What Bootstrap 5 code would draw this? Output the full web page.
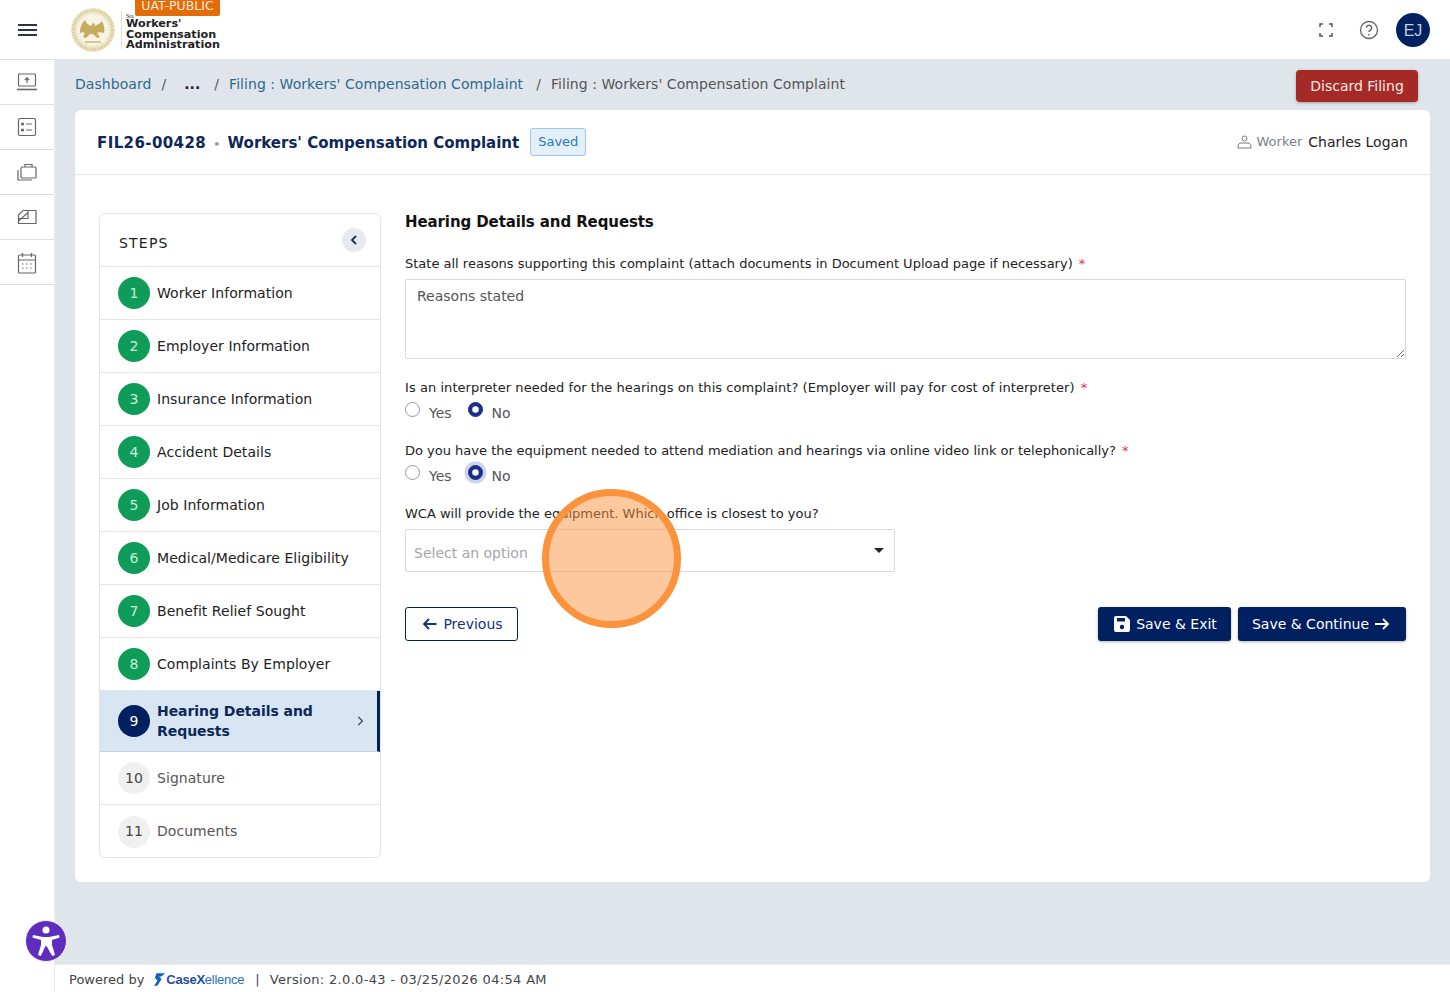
<!DOCTYPE html>
<html lang="en">
<head>
<meta charset="UTF-8">
<title>Hearing Details and Requests</title>
<link href="https://cdn.jsdelivr.net/npm/bootstrap@5.3.0/dist/css/bootstrap.min.css" rel="stylesheet">
<style>
html, body { height: 100%; overflow: hidden; }
body { font-family: "DejaVu Sans", sans-serif; font-size: 14px; color: #212529; background: #e0e5ec; }
.app-shell { height: 992px; }
.top-bar { height: 60px; background: #fff; border-bottom: 1px solid #dfe3e8; padding: 0 20px 0 18px; position: relative; }
.logo-box { margin-left: 32px; height: 59px; position: relative; }
.logo-divider { width: 1px; height: 38px; background: #e6dfc4; margin: 0 4px 0 5px; }
.logo-text { font-size: 11.2px; font-weight: 700; line-height: 10.5px; color: #222; padding-top: 5px; white-space: nowrap; }
.logo-state { font-family: "Liberation Serif", serif; font-size: 6px; font-weight: 400; line-height: 6px; display: block; }
.uat-tag { position: absolute; left: 65px; top: 0; width: 85px; height: 16px; background: #e36c0a; color: #fde9d9; font-size: 12.5px; line-height: 12px; text-align: center; border-radius: 0 0 2px 2px; }
.avatar-dot { width: 34px; height: 34px; padding-top: 2px; border-radius: 50%; background: #002060; color: #c3cfe2; font-size: 16px; display: flex; align-items: center; justify-content: center; font-family: "Liberation Sans", sans-serif; }
.side-rail { width: 55px; background: #fff; border-right: 1px solid #e8ebef; flex: none; }
.rail-item { height: 45px; border-bottom: 1px solid #d9dde2; display: flex; align-items: center; justify-content: center; padding-right: 1px; }
.main-pane { min-width: 0; }
.crumb-row { height: 50px; padding: 0 32px 2px 20px; letter-spacing: .05px; }
.crumb-row .breadcrumb { font-size: 14px; margin: 0; --bs-breadcrumb-divider-color: #555; --bs-breadcrumb-item-padding-x: 10px; }
.crumb-row a { color: #2d6a8f; text-decoration: none; }
.crumb-row .breadcrumb-item.active { color: #555; padding-left: 13px; }
.crumb-dots { color: #222; font-weight: 700; padding: 0 4px 0 8px; }
.discard-btn { background: #a52a25; border: 0; color: #fbe9e7; font-size: 14px; width: 122px; height: 32px; padding: 0; border-radius: 4px; box-shadow: 0 1px 3px rgba(0,0,0,.3); margin-top: 4px; letter-spacing: 0; }
.filing-card { margin: 0 20px 0 20px; height: 772px; border: 0; border-radius: 6px; }
.filing-head { height: 65px; padding: 0 22px; border-bottom: 1px solid #e3e6ea; }
.filing-title { color: #0d2858; font-size: 15px; font-weight: 700; margin: 0; white-space: nowrap; padding-top: 1px; }
.filing-id { letter-spacing: .4px; }
.title-sep { color: #999; margin: 0 2px; font-size: 11px; }
.saved-tag { background: #e3f0fb; border: 1px solid #9cc8ea; color: #2b78b5; font-size: 13px; border-radius: 3px; padding: 0 7px; height: 28px; display: flex; align-items: center; margin-left: 11px; }
.worker-lbl { color: #7d8287; font-size: 13px; margin: 0 6px 0 4px; }
.worker-name { color: #222; font-size: 14px; }
.filing-body { padding: 38px 24px 0 24px; }
.steps-box { width: 282px; flex: none; border: 1px solid #e0e3e7; border-radius: 6px; height: 645px; overflow: hidden; }
.steps-head { height: 53px; padding: 6px 14px 0 19px; border-bottom: 1px solid #e3e6ea; font-size: 14px; letter-spacing: 1.2px; color: #222; }
.collapse-dot { width: 24px; height: 24px; border-radius: 50%; background: #e6e9f0; display: flex; align-items: center; justify-content: center; margin-top: -7px; }
.step-row { height: 53px; padding: 0 18px; border-bottom: 1px solid #e3e6ea; gap: 7px; color: #222; letter-spacing: .05px; }
.step-row:last-child { border-bottom: 0; }
.step-num { width: 32px; height: 32px; border-radius: 50%; flex: none; display: flex; align-items: center; justify-content: center; font-size: 14px; font-weight: 400; }
.num-done { background: #0e9c58; color: #c9f1dc; }
.num-active { background: #002060; color: #fff; }
.num-todo { background: #f0f0f0; color: #444; }
.step-now { height: 61px; background: #d8e5f2; border-bottom: 1px solid #c5d2df; border-right: 3px solid #002060; color: #0d2858; font-weight: 700; line-height: 20px; padding-right: 13px; letter-spacing: -.05px; }
.step-later { color: #555; }
.form-pane { flex: 1; padding-left: 24px; min-width: 0; }
.form-title { font-size: 15px; font-weight: 700; color: #111; margin: 0 0 24px; line-height: 19px; letter-spacing: -.1px; }
.field-lbl { font-size: 13px; color: #222; margin-bottom: 5px; line-height: 16px; display: block; }
.lbl-wide { letter-spacing: .06px; }
.req-mark { color: #dc3545; margin-left: 2px; }
.reason-box { height: 80px; font-size: 14px; color: #555; padding: 6px 11px; border-color: #d5d8dc; border-radius: 2px; margin: 7px 0 21px; }
.radio-row { height: 24px; margin-bottom: 18px; gap: 16px; color: #555; }
.radio-row .form-check { margin: 0; padding-left: 24px; min-height: 0; line-height: 20px; }
.radio-row .form-check-input { width: 15px; height: 15px; margin-left: -24px; margin-top: 0; border-color: #999; position: relative; top: -1px; }
.radio-row .form-check-input:checked { background-color: #1a2f8a; border-color: #1a2f8a; }
.radio-focus { box-shadow: 0 0 0 3.5px #ccd4ea; }
.office-pick { width: 490px; height: 43px; margin-top: 7px; border: 1px solid #d5d8dc; border-radius: 2px; padding: 0 8px; color: #a3a6aa; font-size: 14px; }
.pick-text { padding-top: 5px; }
.pick-caret { width: 0; height: 0; border-left: 5px solid transparent; border-right: 5px solid transparent; border-top: 5px solid #222; margin-right: 2px; }
.form-actions { margin-top: 35px; }
.prev-btn { width: 113px; height: 34px; padding: 0 0 0 2px; gap: 6px; font-size: 14px; color: #1a2f7a; border: 1px solid #002060; border-radius: 3px; background: #fff; }
.save-btn { height: 34px; padding: 0; font-size: 14px; color: #fff; background: #002060; border: 0; border-radius: 3px; box-shadow: 0 1px 3px rgba(0,0,0,.3); gap: 6px; }
.save-exit { width: 133px; padding-left: 2px; }
.save-next { width: 168px; padding-right: 2px; gap: 5px; }
.click-ring { position: absolute; left: 542px; top: 489px; width: 139px; height: 139px; border-radius: 50%; border: 7px solid #fb923c; background: rgba(251,146,60,.5); z-index: 20; }
.a11y-btn { position: absolute; left: 25px; top: 920px; width: 42px; height: 42px; border-radius: 50%; background: #5f2dbd; border: 1px solid #f3eefc; display: flex; align-items: center; justify-content: center; z-index: 20; }
.page-foot { height: 28px; background: #fff; padding: 2px 0 0 14px; margin-top: auto; font-size: 13px; color: #444; border-top: 1px solid #e8ebef; }
.foot-mark { margin-left: 10px; }
.brand-name { font-family: "Liberation Sans", sans-serif; font-size: 13px; color: #2a6cc0; letter-spacing: -.25px; margin: 0 11px 0 1px; }
.brand-name b { color: #1c4f9c; }
.version-txt { letter-spacing: .33px; margin-left: 10px; }
</style>
</head>
<body>
<div class="app-shell d-flex flex-column position-relative">
  <header class="top-bar d-flex align-items-center">
    <svg width="20" height="14" viewBox="0 0 20 14" fill="none" stroke="#2b3440" stroke-width="2"><path d="M0 2h19M0 7h19M0 12h19"/></svg>
    <div class="logo-box d-flex align-items-center">
      <svg width="46" height="46" viewBox="0 0 46 46">
        <circle cx="23" cy="23" r="22" fill="#f1ead0"/>
        <circle cx="23" cy="23" r="19.500" fill="none" stroke="#d8ca98" stroke-width="3.500" stroke-dasharray="1.500 1"/>
        <circle cx="23" cy="23" r="15.500" fill="#f8f4e4"/>
        <path d="M10 26c0-6 2-10 5-13 1 3 3 5 6 6l2-3 2 1-1 2c3-1 6-2 8-5 2 4 3 8 2 12-3-1-5-1-7 0l3 4-3 1-4-4h-3l-4 4-3-1 2-4c-2-1-3-1-5 0z" fill="#c4ab5e"/>
        <path d="M15 35h16" stroke="#cdb975" stroke-width="1.500"/>
      </svg>
      <span class="logo-divider"></span>
      <div class="logo-text"><span class="logo-state">Sta</span>Workers'<br>Compensation<br>Administration</div>
      <div class="uat-tag">UAT-PUBLIC</div>
    </div>
    <div class="ms-auto d-flex align-items-center">
      <svg width="14" height="14" viewBox="0 0 14 14" fill="none" stroke="#555" stroke-width="1.500"><path d="M1 4V1h3M10 1h3v3M13 10v3h-3M4 13H1v-3"/></svg>
      <svg style="margin:0 17px 0 26px" width="20" height="20" viewBox="0 0 20 20" fill="none" stroke="#666" stroke-width="1.300"><circle cx="10" cy="10" r="8.500"/><path d="M7.400 7.800a2.600 2.600 0 1 1 3.900 2.300c-.8.500-1.300 1-1.300 2" stroke-width="1.500"/><circle cx="10" cy="14.600" r=".9" fill="#666" stroke="none"/></svg>
      <div class="avatar-dot">EJ</div>
    </div>
  </header>
  <div class="d-flex flex-grow-1" style="min-height:0">
    <nav class="side-rail">
      <div class="rail-item"><svg width="22" height="20" viewBox="0 0 22 20" fill="none" stroke="#666" stroke-width="1.200"><rect x="2.500" y="2" width="17" height="12" rx="1"/><path d="M1 17.500h20" stroke-width="1.600"/><path d="M11 11V6M8.800 8L11 5.800 13.200 8"/></svg></div>
      <div class="rail-item"><svg width="20" height="20" viewBox="0 0 20 20" fill="none" stroke="#666" stroke-width="1.200"><rect x="1.500" y="1.500" width="17" height="17" rx="1.500"/><path d="M9 7h6M9 13h6"/><circle cx="5.500" cy="7" r="1" fill="#666"/><circle cx="5.500" cy="13" r="1" fill="#666"/></svg></div>
      <div class="rail-item"><svg width="22" height="20" viewBox="0 0 22 20" fill="none" stroke="#666" stroke-width="1.200"><rect x="5" y="5" width="15" height="11" rx="1"/><path d="M9 5V2.500h7V5M2 8v10h14"/></svg></div>
      <div class="rail-item"><svg width="20" height="16" viewBox="0 0 20 16" fill="none" stroke="#666" stroke-width="1.200"><path d="M6 1.500h13v13H1.500V6z"/><path d="M1.500 9.500H11V1.500M1.500 12l9-8"/></svg></div>
      <div class="rail-item"><svg style="margin-top:2px" width="20" height="22" viewBox="0 0 20 22" fill="none" stroke="#666" stroke-width="1.200"><rect x="1.500" y="3" width="17" height="18" rx="1"/><path d="M1.500 8h17M5.500 1v4M14.500 1v4"/><path d="M5 12h2M9 12h2M13 12h2M5 16h2M9 16h2M13 16h2" stroke-dasharray="1.500 1"/></svg></div>
    </nav>
    <main class="main-pane flex-grow-1 d-flex flex-column">
      <div class="crumb-row d-flex align-items-center justify-content-between">
        <ol class="breadcrumb">
          <li class="breadcrumb-item"><a href="#">Dashboard</a></li>
          <li class="breadcrumb-item"><span class="crumb-dots">...</span></li>
          <li class="breadcrumb-item"><a href="#">Filing : Workers' Compensation Complaint</a></li>
          <li class="breadcrumb-item active">Filing : Workers' Compensation Complaint</li>
        </ol>
        <button class="btn discard-btn" type="button">Discard Filing</button>
      </div>
      <section class="card filing-card">
        <div class="filing-head d-flex align-items-center">
          <h1 class="filing-title"><span class="filing-id">FIL26-00428</span> <span class="title-sep">•</span> Workers' Compensation Complaint</h1>
          <span class="saved-tag">Saved</span>
          <div class="ms-auto d-flex align-items-center">
            <svg width="15" height="14" viewBox="0 0 15 14" fill="none" stroke="#777" stroke-width="1"><circle cx="7.500" cy="3.500" r="2.500"/><path d="M1 13v-2c0-1.500 1.500-3 3-3h7c1.500 0 3 1.500 3 3v2z"/></svg>
            <span class="worker-lbl">Worker</span>
            <span class="worker-name">Charles Logan</span>
          </div>
        </div>
        <div class="filing-body d-flex">
          <aside class="steps-box">
            <div class="steps-head d-flex align-items-center justify-content-between">
              <span>STEPS</span>
              <span class="collapse-dot"><svg width="8" height="10" viewBox="0 0 8 10" fill="none" stroke="#1c2f52" stroke-width="1.800"><path d="M6 1L2 5l4 4"/></svg></span>
            </div>
            <div class="step-row d-flex align-items-center"><span class="step-num num-done">1</span>Worker Information</div>
            <div class="step-row d-flex align-items-center"><span class="step-num num-done">2</span>Employer Information</div>
            <div class="step-row d-flex align-items-center"><span class="step-num num-done">3</span>Insurance Information</div>
            <div class="step-row d-flex align-items-center"><span class="step-num num-done">4</span>Accident Details</div>
            <div class="step-row d-flex align-items-center"><span class="step-num num-done">5</span>Job Information</div>
            <div class="step-row d-flex align-items-center"><span class="step-num num-done">6</span>Medical/Medicare Eligibility</div>
            <div class="step-row d-flex align-items-center"><span class="step-num num-done">7</span>Benefit Relief Sought</div>
            <div class="step-row d-flex align-items-center"><span class="step-num num-done">8</span>Complaints By Employer</div>
            <div class="step-row step-now d-flex align-items-center"><span class="step-num num-active">9</span><span class="flex-grow-1">Hearing Details and Requests</span><svg width="8" height="12" viewBox="0 0 8 12" fill="none" stroke="#444" stroke-width="1.600"><path d="M1.500 1l5 5-5 5"/></svg></div>
            <div class="step-row step-later d-flex align-items-center"><span class="step-num num-todo">10</span>Signature</div>
            <div class="step-row step-later d-flex align-items-center"><span class="step-num num-todo">11</span>Documents</div>
          </aside>
          <div class="form-pane">
            <h2 class="form-title">Hearing Details and Requests</h2>
            <label class="field-lbl">State all reasons supporting this complaint (attach documents in Document Upload page if necessary) <span class="req-mark">*</span></label>
            <textarea class="form-control reason-box">Reasons stated</textarea>
            <label class="field-lbl lbl-wide">Is an interpreter needed for the hearings on this complaint? (Employer will pay for cost of interpreter) <span class="req-mark">*</span></label>
            <div class="radio-row d-flex align-items-center">
              <div class="form-check"><input class="form-check-input" type="radio" name="interp"><label class="form-check-label">Yes</label></div>
              <div class="form-check"><input class="form-check-input" type="radio" name="interp" checked><label class="form-check-label">No</label></div>
            </div>
            <label class="field-lbl">Do you have the equipment needed to attend mediation and hearings via online video link or telephonically? <span class="req-mark">*</span></label>
            <div class="radio-row d-flex align-items-center">
              <div class="form-check"><input class="form-check-input" type="radio" name="equip"><label class="form-check-label">Yes</label></div>
              <div class="form-check"><input class="form-check-input radio-focus" type="radio" name="equip" checked><label class="form-check-label">No</label></div>
            </div>
            <label class="field-lbl">WCA will provide the equipment. Which office is closest to you?</label>
            <div class="office-pick d-flex align-items-center justify-content-between"><span class="pick-text">Select an option</span><span class="pick-caret"></span></div>
            <div class="form-actions d-flex justify-content-between">
              <button class="btn prev-btn d-flex align-items-center justify-content-center" type="button"><svg width="15" height="14" viewBox="0 0 15 14" fill="none" stroke="#1a2f7a" stroke-width="1.800"><path d="M14.500 7H2M7 2L2 7l5 5"/></svg>Previous</button>
              <div class="d-flex" style="gap:7px">
                <button class="btn save-btn save-exit d-flex align-items-center justify-content-center" type="button"><svg width="16" height="16" viewBox="0 0 16 16"><path d="M2 0h10l4 4v10a2 2 0 0 1-2 2H2a2 2 0 0 1-2-2V2a2 2 0 0 1 2-2z" fill="#fff"/><rect x="3" y="2" width="8" height="3.500" fill="#002060"/><circle cx="8" cy="11" r="2.200" fill="#002060"/></svg>Save &amp; Exit</button>
                <button class="btn save-btn save-next d-flex align-items-center justify-content-center" type="button">Save &amp; Continue<svg width="16" height="14" viewBox="0 0 16 14" fill="none" stroke="#fff" stroke-width="1.800"><path d="M1 7h13M9 2l5 5-5 5"/></svg></button>
              </div>
            </div>
          </div>
        </div>
      </section>
      <footer class="page-foot d-flex align-items-center">
        Powered by
        <svg class="foot-mark" width="11" height="15" viewBox="0 0 13 15"><path d="M3 0h10L9 4H6l3 3-5 8H0l4-6-3-4z" fill="#1060c8"/></svg>
        <span class="brand-name"><b>Case</b><b>X</b>ellence</span>|<span class="version-txt">Version: 2.0.0-43 - 03/25/2026 04:54 AM</span>
      </footer>
    </main>
  </div>
  <div class="click-ring"></div>
  <div class="a11y-btn"><svg width="30" height="32" viewBox="0 0 30 32" fill="#fff"><circle cx="15" cy="5" r="3.500"/><path d="M2 10l10 2h6l10-2 .6 2.400L21 15v5l3 10-2.800 1L15.500 21h-1l-4.700 10-2.800-1 3-10v-5L1.400 12.400z"/></svg></div>
</div>
<script src="https://cdn.jsdelivr.net/npm/bootstrap@5.3.0/dist/js/bootstrap.bundle.min.js"></script>
</body>
</html>
